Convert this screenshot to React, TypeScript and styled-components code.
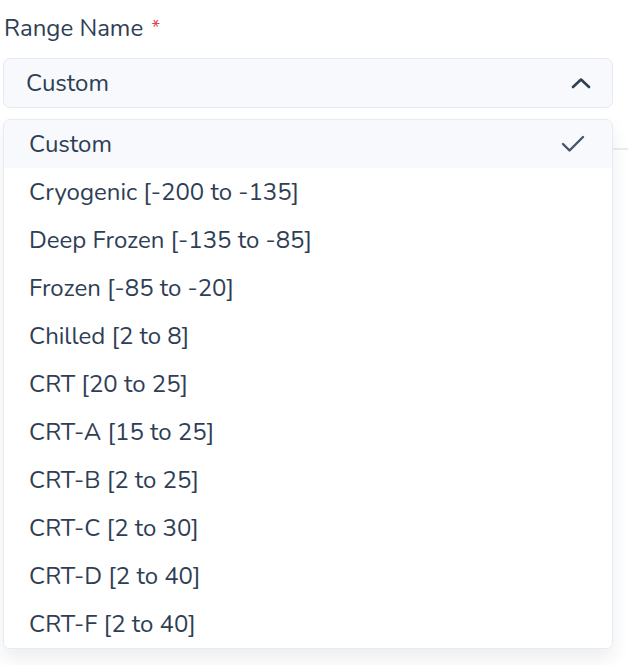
import { createGlobalStyle } from "styled-components";
import styled from "styled-components";

const Global = createGlobalStyle`
body {
    margin: 0;
    background: #ffffff;
    font-family: "Nunito", "Lato", "Open Sans", sans-serif;
    color: #2e3e55;
}
`

const Wrap = styled.div`
padding: 12px 15px 0 3px;
position: relative;
`

const Label = styled.div`
font-size: 24px;
line-height: 32px;
padding-left: 1px;
color: #2e3e55;
margin-bottom: 14px;
`

const Star = styled.span`
color: #e0464a;
margin-left: 8px;
font-size: 20px;
vertical-align: 2px;
`

const Field = styled.div`
position: relative;
`

const Trigger = styled.div`
display: flex;
align-items: center;
justify-content: space-between;
height: 48px;
padding: 0 21px 0 22px;
background: #f7f9fc;
border: 1.5px solid #e6eaf2;
border-radius: 7px;
font-size: 24px;
color: #2e3e55;
`

const Menu = styled.ul`
position: absolute;
top: 60.5px;
left: 0;
right: 0;
margin: 0;
padding: 0;
list-style: none;
background: #ffffff;
border: 1.5px solid #e6eaf2;
border-radius: 7px;
box-shadow: 0 10px 18px rgba(30, 40, 60, 0.08);
overflow: hidden;
z-index: 2;
`

const Item = styled.li<{ $active?: boolean }>`
display: flex;
align-items: center;
justify-content: space-between;
height: 48px;
padding: 0 27px 0 25px;
font-size: 24px;
color: #2e3e55;
background: ${p => p.$active ? "#f7f9fc" : "#ffffff"};
`

const Below = styled.div`
margin-top: 40px;
margin-right: -15px;
border-top: 2px solid #e9edf3;
height: 515px;
`

const options = [
    "Custom",
    "Cryogenic [-200 to -135]",
    "Deep Frozen [-135 to -85]",
    "Frozen [-85 to -20]",
    "Chilled [2 to 8]",
    "CRT [20 to 25]",
    "CRT-A [15 to 25]",
    "CRT-B [2 to 25]",
    "CRT-C [2 to 30]",
    "CRT-D [2 to 40]",
    "CRT-F [2 to 40]",
];

function App() {
    const selected = "Custom";
    return (
        <Wrap>
            <Global />
            <Label>Range Name<Star>*</Star></Label>
            <Field>
                <Trigger>
                    <span>{selected}</span>
                    <svg width="20" height="12" viewBox="0 0 20 12" fill="none">
                        <path d="M2 10 L10 2.5 L18 10" stroke="#2e3e55" strokeWidth="2.6" strokeLinecap="round" strokeLinejoin="round" />
                    </svg>
                </Trigger>
                <Menu>
                    {options.map((value, index) => (
                        <Item key={index} $active={value === selected}>
                            <span>{value}</span>
                            {value === selected && (
                                <svg width="24" height="18" viewBox="0 0 24 18" fill="none">
                                    <path d="M2 9 L8.5 15.5 L22 2" stroke="#45566c" strokeWidth="2.4" strokeLinecap="round" strokeLinejoin="round" />
                                </svg>
                            )}
                        </Item>
                    ))}
                </Menu>
            </Field>
            <Below />
        </Wrap>
    );
}

export default App;
